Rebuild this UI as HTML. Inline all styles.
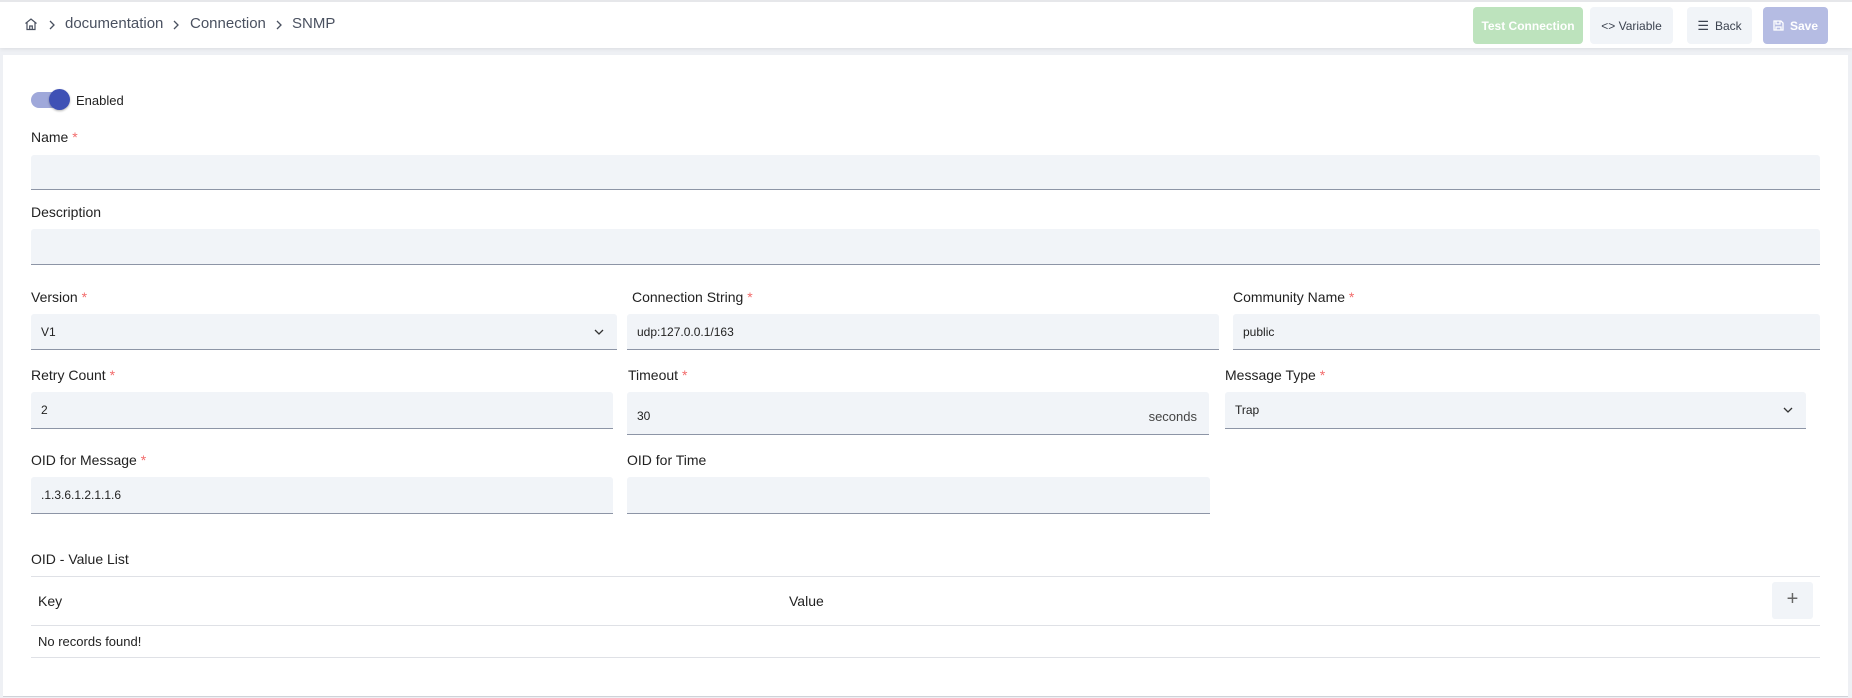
<!DOCTYPE html>
<html><head><style>
*{box-sizing:border-box;margin:0;padding:0}
body{width:1852px;height:698px;background:#eef0f4;font-family:"Liberation Sans",sans-serif;color:#1f2330;position:relative;overflow:hidden}
.hdr{position:absolute;left:0;top:0;width:1852px;height:48px;background:#fff;box-shadow:0 1px 4px rgba(0,0,0,.08);border-top:2px solid #e6e7ea}
.bc{position:absolute;top:13px;font-size:15px;color:#4a5160}
.sep{position:absolute;top:18px}
.btn{position:absolute;top:5px;height:37px;border-radius:4px;font-size:12px;display:flex;align-items:center;justify-content:center;gap:6px}
.card{position:absolute;left:3px;top:55px;width:1845px;height:642px;background:#fff;border-bottom:1px solid #cfd2d8}
.lbl{position:absolute;font-size:14px;color:#222}
.lbl i{color:#f26b6b;font-style:normal}
.inp{position:absolute;background:#f1f4f8;border-bottom:1px solid #8d95a6;border-radius:3px 3px 0 0;font-size:12px;color:#222;padding-left:10px;display:flex;align-items:center}
.chev{position:absolute;right:12px;top:50%;margin-top:-5px}
.line{position:absolute;left:31px;width:1789px;height:1px;background:#dfe1e6}
</style></head><body>
<div class="hdr">
<svg style="position:absolute;left:24px;top:15px" width="14" height="14" viewBox="0 0 14 14" fill="none" stroke="#4a5160" stroke-width="1.2"><path d="M1.5 6.5L7 2l5.5 4.5M3 5.5V12.5h8V5.5M5.7 12.5V9h2.6v3.5"/></svg>
<svg class="sep" style="left:48px" width="8" height="10" viewBox="0 0 8 10" fill="none" stroke="#4a5160" stroke-width="1.3"><path d="M2 1l4 4-4 4"/></svg>
<span class="bc" style="left:65px">documentation</span>
<svg class="sep" style="left:172px" width="8" height="10" viewBox="0 0 8 10" fill="none" stroke="#4a5160" stroke-width="1.3"><path d="M2 1l4 4-4 4"/></svg>
<span class="bc" style="left:190px">Connection</span>
<svg class="sep" style="left:275px" width="8" height="10" viewBox="0 0 8 10" fill="none" stroke="#4a5160" stroke-width="1.3"><path d="M2 1l4 4-4 4"/></svg>
<span class="bc" style="left:292px">SNMP</span>
<div class="btn" style="left:1473px;width:110px;background:#bde3bd;color:#fff;font-weight:bold">Test Connection</div>
<div class="btn" style="left:1590px;width:83px;background:#f1f4f8;color:#3c4350">&lt;&gt; Variable</div>
<div class="btn" style="left:1687px;width:65px;background:#f1f4f8;color:#3c4350"><span style="font-size:13px">☰</span> Back</div>
<div class="btn" style="left:1763px;width:65px;background:#b5bce3;color:#fff;font-weight:bold"><svg width="11" height="11" viewBox="0 0 11 11" fill="none" stroke="#fff" stroke-width="1.3"><path d="M1 1h7l2 2v7H1z M3 1v3h4V1 M3 10V7h5v3"/></svg> Save</div>
</div>
<div class="card"></div>
<div style="position:absolute;left:31px;top:92px;width:36px;height:16px;border-radius:8px;background:#9fa8da"></div>
<div style="position:absolute;left:49px;top:89px;width:21px;height:21px;border-radius:50%;background:#3f51b5;box-shadow:0 1px 2px rgba(0,0,0,.3)"></div>
<div class="lbl" style="left:76px;top:93px;font-size:13px">Enabled</div>
<div class="lbl" style="left:31px;top:129px">Name <i>*</i></div>
<div class="inp" style="left:31px;top:155px;width:1789px;height:35px"></div>
<div class="lbl" style="left:31px;top:204px">Description</div>
<div class="inp" style="left:31px;top:229px;width:1789px;height:36px"></div>
<div class="lbl" style="left:31px;top:289px">Version <i>*</i></div>
<div class="inp" style="left:31px;top:314px;width:586px;height:36px">V1<svg class="chev" width="12" height="10" viewBox="0 0 12 10" fill="none" stroke="#333" stroke-width="1.3"><path d="M2 3l4 4 4-4"/></svg></div>
<div class="lbl" style="left:632px;top:289px">Connection String <i>*</i></div>
<div class="inp" style="left:627px;top:314px;width:592px;height:36px">udp:127.0.0.1/163</div>
<div class="lbl" style="left:1233px;top:289px">Community Name <i>*</i></div>
<div class="inp" style="left:1233px;top:314px;width:587px;height:36px">public</div>
<div class="lbl" style="left:31px;top:367px">Retry Count <i>*</i></div>
<div class="inp" style="left:31px;top:392px;width:582px;height:37px">2</div>
<div class="lbl" style="left:628px;top:367px">Timeout <i>*</i></div>
<div class="inp" style="left:627px;top:392px;width:582px;height:43px;padding-top:6px">30<span style="position:absolute;right:12px;top:17px;font-size:13px;color:#444">seconds</span></div>
<div class="lbl" style="left:1225px;top:367px">Message Type <i>*</i></div>
<div class="inp" style="left:1225px;top:392px;width:581px;height:37px">Trap<svg class="chev" width="12" height="10" viewBox="0 0 12 10" fill="none" stroke="#333" stroke-width="1.3"><path d="M2 3l4 4 4-4"/></svg></div>
<div class="lbl" style="left:31px;top:452px">OID for Message <i>*</i></div>
<div class="inp" style="left:31px;top:477px;width:582px;height:37px">.1.3.6.1.2.1.1.6</div>
<div class="lbl" style="left:627px;top:452px">OID for Time</div>
<div class="inp" style="left:627px;top:477px;width:583px;height:37px"></div>
<div class="lbl" style="left:31px;top:551px">OID - Value List</div>
<div class="line" style="top:576px"></div>
<div class="lbl" style="left:38px;top:593px">Key</div>
<div class="lbl" style="left:789px;top:593px">Value</div>
<div style="position:absolute;left:1772px;top:582px;width:41px;height:37px;background:#f1f4f8;border-radius:3px;text-align:center;line-height:35px;font-size:20px;color:#666">+</div>
<div class="line" style="top:625px"></div>
<div class="lbl" style="left:38px;top:634px;font-size:13px">No records found!</div>
<div class="line" style="top:657px"></div>
</body></html>
